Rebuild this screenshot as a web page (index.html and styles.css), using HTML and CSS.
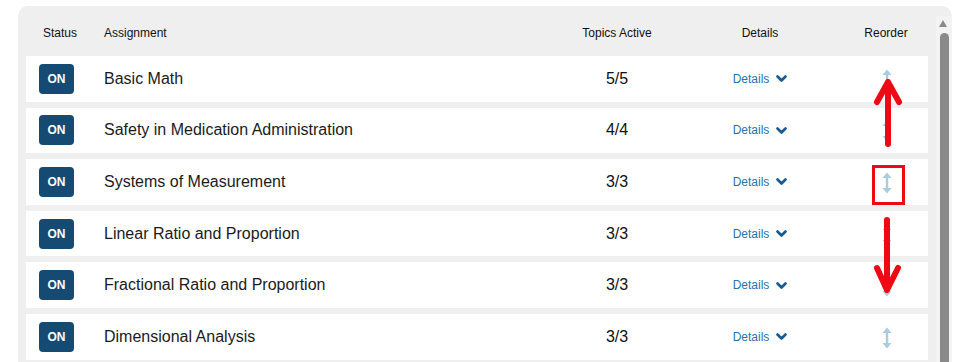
FILE: index.html
```html
<!DOCTYPE html>
<html lang="en">
<head>
  <meta charset="UTF-8" />
  <title>Assignments</title>
  <link rel="stylesheet" href="styles.css">
</head>
<body>

<div class="panel">
  <div class="table">
    <div class="head">
      <div class="c-status">Status</div>
      <div class="c-name">Assignment</div>
      <div class="c-center">Topics Active</div>
      <div class="c-center">Details</div>
      <div class="c-center c-reorder">Reorder</div>
    </div>
    <div id="rows">
      <!-- rows inserted by JS -->
    </div>
  </div>
  <div class="scroll">
    <div class="scroll-up"></div>
    <div class="scroll-thumb"></div>
  </div>
</div>

<!-- red annotations drawn over the list -->
<svg class="marks" width="962" height="362" viewBox="0 0 962 362">
  <g fill="none" stroke="#ee0a14" stroke-width="6" stroke-linecap="round" stroke-linejoin="round">
    <line x1="888" y1="144" x2="888" y2="84"/>
    <polyline points="877,102 888,82 899,102"/>
    <line x1="887" y1="220" x2="887" y2="288"/>
    <polyline points="877,268 887,290 898,268"/>
  </g>
  <rect x="873.5" y="166.5" width="30" height="37" fill="none" stroke="#ee0a14" stroke-width="3"/>
</svg>

<script>
  const assignments = [
    ["Basic Math", "5/5"],
    ["Safety in Medication Administration", "4/4"],
    ["Systems of Measurement", "3/3"],
    ["Linear Ratio and Proportion", "3/3"],
    ["Fractional Ratio and Proportion", "3/3"],
    ["Dimensional Analysis", "3/3"]
  ];
  const chevron = '<svg class="chev" width="11" height="8" viewBox="0 0 11 8"><polyline points="1.5,1.5 5.5,5.5 9.5,1.5" fill="none" stroke="#175a91" stroke-width="2.6" stroke-linecap="round" stroke-linejoin="round"/></svg>';
  const grip = '<svg width="12" height="24" viewBox="0 0 12 24"><line x1="6" y1="5" x2="6" y2="19" stroke="#a9cce1" stroke-width="2.4"/><polygon points="1.5,7 6,1.5 10.5,7" fill="#a9cce1"/><polygon points="1.5,17 6,22.5 10.5,17" fill="#a9cce1"/></svg>';
  const list = document.getElementById('rows');
  assignments.forEach(([name, topics]) => {
    list.innerHTML += `<div class="row">
      <div class="c-status"><span class="badge">ON</span></div>
      <div class="c-name title">${name}</div>
      <div class="c-center count">${topics}</div>
      <div class="c-details"><a class="details" href="#">Details ${chevron}</a></div>
      <div class="c-center c-reorder">${grip}</div>
    </div>`;
  });
</script>

</body>
</html>
```

FILE: styles.css
```css
html, body {
  margin: 0;
  padding: 0;
  background: #fff;
  font-family: 'Liberation Sans', Arial, sans-serif;
  overflow: hidden;
  height: 362px;
}
.panel {
  display: flex;
  margin: 6px 10px 0 18px;
  padding-left: 8px;
  background: #efefef;
  border-radius: 10px 10px 0 0;
  height: 400px;
}
.table {
  width: 902px;
}
.head, .row {
  display: grid;
  grid-template-columns: 78px 1fr 140px 146px 95px;
  align-items: center;
}
.head {
  height: 47px;
  padding-top: 3px;
  font-size: 12px;
  color: #111;
}
.head .c-status {
  padding-left: 17px;
}
.row {
  height: 45.6px;
  margin-bottom: 6px;
  background: #fff;
}
.row .c-status {
  padding-left: 13px;
  display: flex;
}
.c-center {
  text-align: center;
}
.c-details {
  display: flex;
  justify-content: center;
}
.c-reorder {
  padding-left: 12px;
  display: flex;
  justify-content: center;
}
.head .c-reorder {
  padding-left: 11px;
}
.badge {
  display: inline-flex;
  align-items: center;
  justify-content: center;
  width: 35px;
  height: 30px;
  border-radius: 4px;
  background: #154b73;
  color: #fff;
  font-size: 12px;
  font-weight: bold;
}
.title {
  font-size: 16px;
  color: #1b1b1b;
}
.count {
  font-size: 16px;
  color: #111;
}
.details {
  color: #2773ad;
  font-size: 12px;
  text-decoration: none;
  display: flex;
  align-items: center;
  gap: 7px;
}
.chev {
  display: block;
  margin-top: 1px;
}
.row .c-reorder svg {
  display: block;
  margin-top: 2px;
}
.scroll {
  width: 16px;
  margin-left: 8px;
  margin-top: 10px;
  background: #f3f3f3;
}
.scroll-up {
  width: 0;
  height: 0;
  margin: 4px 0 0 3px;
  border-left: 4.5px solid transparent;
  border-right: 4.5px solid transparent;
  border-bottom: 7px solid #8a8a8a;
}
.scroll-thumb {
  margin: 6px 0 0 4px;
  width: 9px;
  height: 400px;
  background: #8a8a8a;
  border-radius: 5px 5px 0 0;
}
.marks {
  position: absolute;
  top: 0;
  left: 0;
  pointer-events: none;
}
```
